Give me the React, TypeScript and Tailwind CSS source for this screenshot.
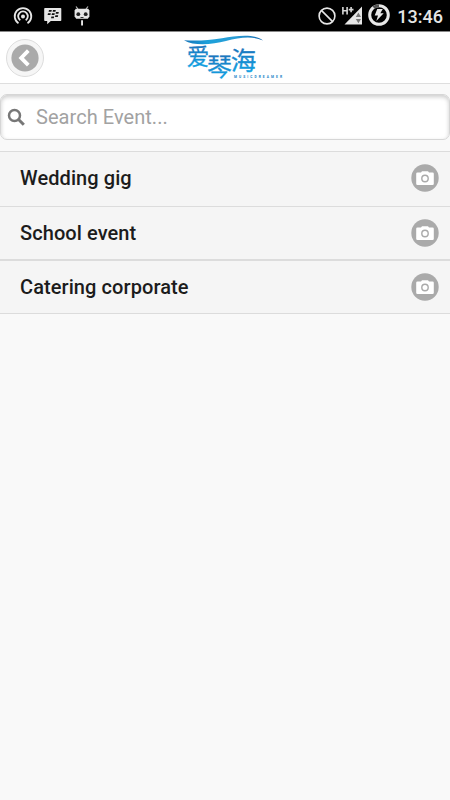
import React from 'react';

interface EventItem {
  title: string;
  className: string;
}

const events: EventItem[] = [
  { title: 'Wedding gig', className: 'h-[55px] border-t pb-[2px]' },
  { title: 'School event', className: 'h-[53px] border-t' },
  { title: 'Catering corporate', className: 'h-[55px] border-t-2 border-b' },
];

const HotspotIcon = () => (
  <svg className="w-5 h-5" viewBox="0 0 20 20" fill="none" stroke="#e6e6e6" strokeWidth="1.8">
    <path d="M5.500 17.300a8.300 8.300 0 1 1 9 0" />
    <path d="M7.300 14.200a4.800 4.800 0 1 1 5.400 0" />
    <circle cx="10" cy="10.600" r="2" fill="#e6e6e6" stroke="none" />
  </svg>
);

const MessengerIcon = () => (
  <svg className="w-[18px] h-[18px]" viewBox="0 0 18 18">
    <path d="M1 1h15.500q.8 0 .8.8v11.400q0 .8-.8.8H6.800L3.200 17.200V14H1q-.8 0-.8-.8V1.800Q.2 1 1 1Z" fill="#e6e6e6" />
    <path
      d="M5 3h2.800l-.4 1.800H4.600ZM9 3h2.800l-.4 1.800H8.600ZM4 6.200h2.800l-.4 1.800H3.600ZM8 6.200h2.800l-.4 1.800H7.600ZM12 5h2.800l-.4 1.800h-2.800ZM7.400 9.400h2.800L9.800 11.200H7ZM11.400 8.200h2.800l-.4 1.800H11Z"
      fill="#111"
    />
  </svg>
);

const RobotIcon = () => (
  <svg className="w-4 h-5" viewBox="0 0 16 20">
    <path d="M2 .5 4 3M14 .5 12 3" stroke="#bbb" strokeWidth="1.200" />
    <path d="M1.800 2.800h12.400l1.200 1.600v6L13.800 12.800H2.200L.6 10.400v-6Z" fill="#e6e6e6" />
    <circle cx="4.300" cy="8.200" r="1.900" fill="#222" />
    <circle cx="11.700" cy="8.200" r="1.900" fill="#222" />
    <path d="M6.500 11h3v1h-3Z" fill="#333" />
    <path d="M7.100 14.200h1.900v5.300H7.100Z" fill="#e6e6e6" />
  </svg>
);

const BlockedIcon = () => (
  <svg className="w-[18px] h-[18px]" viewBox="0 0 18 18" fill="none" stroke="#e6e6e6" strokeWidth="1.600">
    <circle cx="9" cy="9" r="7.900" />
    <path d="m3.400 3.400 11.200 11.200" />
  </svg>
);

const SignalIcon = () => (
  <svg className="w-[21px] h-5" viewBox="0 0 21 20">
    <path d="M20 .500v18H2.500Z" fill="#e6e6e6" />
    <path d="M0 0h12v9H0Z" fill="#000" />
    <path d="M.9 1v7.500M5.100 1v7.500M.9 4.700h4.200M6.700 3.600h4.800M9.100 1v5.200" stroke="#d8d8d8" strokeWidth="1.600" />
    <path d="m16.400 6.600 2.600 4.300h-5.200ZM16.400 17.200l2.600-4.300h-5.200Z" fill="#777" />
  </svg>
);

const BatteryIcon = () => (
  <svg className="w-[22px] h-[22px]" viewBox="0 0 22 22">
    <circle cx="11" cy="11" r="9.300" fill="none" stroke="#e8e8e8" strokeWidth="3" />
    <path d="M5.500 3.500A9.300 9.300 0 0 1 11 1.700" fill="none" stroke="#555" strokeWidth="3" />
    <path d="M9.200 5h5.600l-2.500 4.200h3.400L8.300 17l1.700-5.400H6.700Z" fill="#e8e8e8" />
  </svg>
);

const StatusBar = () => (
  <div className="h-8 bg-black border-b border-[#888] flex items-center justify-between pl-[13px] pr-[8px]">
    <div className="flex items-center gap-[11px]">
      <HotspotIcon />
      <MessengerIcon />
      <div className="pl-[1px]"><RobotIcon /></div>
    </div>
    <div className="flex items-center">
      <BlockedIcon />
      <div className="ml-[6px]"><SignalIcon /></div>
      <div className="ml-[5px] mb-[1px]"><BatteryIcon /></div>
      <span className="ml-[7px] mt-[2px] -mr-px text-[18px] leading-5 font-medium text-[#e6e6e6]">13:46</span>
    </div>
  </div>
);

const Logo = () => (
  <svg className="w-[100px] h-[51px] overflow-visible" viewBox="183 32 100 51">
    <defs>
      <linearGradient id="sea" x1="0" y1="0" x2="0" y2="1">
        <stop offset="0.150" stopColor="#1b70b8" />
        <stop offset="0.900" stopColor="#12a4e4" />
      </linearGradient>
      <linearGradient id="wave" x1="0" y1="0" x2="1" y2="0">
        <stop offset="0" stopColor="#1473b8" />
        <stop offset="0.300" stopColor="#1ba0da" />
        <stop offset="0.650" stopColor="#2b9ed6" />
        <stop offset="1" stopColor="#1468ae" />
      </linearGradient>
    </defs>
    <path
      d="M184 40.200C196 41 208 40.500 222 38.200C236 36 253 33 263 40.500C252 35.800 240 37.500 226 41C212 44.500 195 46.500 184 40.200Z"
      fill="url(#wave)"
    />
    <g fill="url(#sea)" stroke="url(#sea)" strokeWidth="0.300" className="font-['Noto_Sans_CJK_SC',sans-serif]">
      <text x="186.800" y="64.800" fontSize="22.500">爱</text>
      <text x="207" y="75.600" fontSize="25">琴</text>
      <text x="230.800" y="70" fontSize="25.500">海</text>
    </g>
    <text x="234" y="78.200" fontSize="3.300" fontWeight="700" textLength="48" fill="#1783c6">MUSICDREAMER</text>
  </svg>
);

const Header = () => (
  <header className="h-[52px] bg-white border-b border-[#dedede] grid grid-cols-[1fr_100px_1fr] items-center">
    <button
      className="ml-[6px] mt-px size-[38px] rounded-full border border-[#ddd] bg-[#f6f6f6] flex items-center justify-center"
      aria-label="Back"
    >
      <svg className="size-[28px]" viewBox="0 0 28 28">
        <circle cx="14" cy="14" r="13.600" fill="#aaa" />
        <path d="m17.300 6.700-7.100 7.200 7.100 7.200" fill="none" stroke="#fff" strokeWidth="3.800" />
      </svg>
    </button>
    <div className="pl-[8px]"><Logo /></div>
  </header>
);

const SearchBox = () => (
  <div className="h-[46px] mt-[10px] mb-[11px] rounded-[7px] border border-[#d6d6d6] bg-white shadow-[inset_0_2px_4px_#ccc] flex items-center pl-[6px]">
    <svg className="size-[18px]" viewBox="0 0 18 18" fill="none" stroke="#777" strokeWidth="2.500">
      <circle cx="7.500" cy="7.400" r="5.500" />
      <path d="m11.300 11.300 5.500 5.500" strokeWidth="3" />
    </svg>
    <input
      className="ml-[11px] flex-1 min-w-0 bg-transparent outline-none text-[20px] leading-6 tracking-[0.05px] text-[#333] placeholder:text-[#a2a2a2]"
      placeholder="Search Event..."
    />
  </div>
);

const CameraIcon = () => (
  <svg className="size-[28px]" viewBox="0 0 28 28">
    <circle cx="14" cy="14" r="13.700" fill="#aaa" />
    <path
      d="M6.500 8.500H10l1-1.300h6l1 1.300h3.500q1.300 0 1.300 1.300v9.900q0 1.300-1.300 1.300h-15q-1.300 0-1.300-1.300V9.800q0-1.300 1.300-1.300Z"
      fill="#fff"
    />
    <circle cx="14" cy="14.500" r="3.200" fill="#fff" stroke="#aaa" strokeWidth="1.400" />
  </svg>
);

const EventRow: React.FC<{ event: EventItem }> = ({ event }) => (
  <li className={`${event.className} border-[#dcdcdc] bg-[#f5f5f5] flex items-center justify-between pl-5 pr-[11px]`}>
    <span className="pb-px text-[20px] leading-6 font-medium tracking-[0.08px] text-[#1c1c1c]">{event.title}</span>
    <CameraIcon />
  </li>
);

export default function App() {
  return (
    <div className="w-full h-screen bg-[#f9f9f9] overflow-hidden font-[Roboto,sans-serif]">
      <StatusBar />
      <Header />
      <main className="flow-root">
        <SearchBox />
        <ul>
          {events.map((event) => (
            <EventRow key={event.title} event={event} />
          ))}
        </ul>
      </main>
    </div>
  );
}
